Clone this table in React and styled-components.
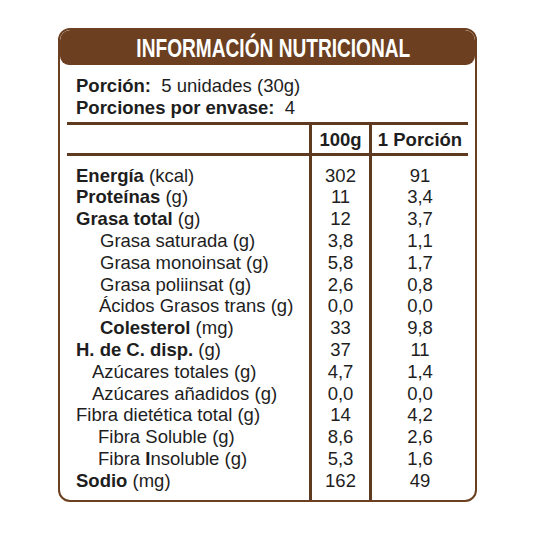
import React from "react";
import styled, { createGlobalStyle } from "styled-components";

const GlobalStyle = createGlobalStyle`
  html, body {
    margin: 0;
    padding: 0;
    background: #ffffff;
  }
  body {
    font-family: "Liberation Sans", Arial, sans-serif;
    color: #1e1e1e;
  }
`;

const BROWN = "#6b3f1f";
const LINE = "#5e3a20";

const Page = styled.div`
  width: 533px;
  height: 533px;
  box-sizing: border-box;
  padding: 28px 0 0 58px;
`;

const Card = styled.div`
  width: 419px;
  box-sizing: border-box;
  border: 2px solid ${BROWN};
  border-radius: 12px;
  overflow: hidden;
  background: #ffffff;
`;

// brown band: its lower corners curve away from the side borders
const Header = styled.div`
  height: 35px;
  background: ${BROWN};
  border-radius: 10px 10px 9px 9px;
  display: flex;
  align-items: center;
  justify-content: center;
  padding-left: 11px;
`;

const Title = styled.span`
  display: inline-block;
  color: #ffffff;
  font-weight: 700;
  font-size: 26px;
  line-height: 26px;
  white-space: nowrap;
  transform: scaleX(0.735);
`;

const Body = styled.div`
  padding: 0 7px;
`;

const Serving = styled.div`
  padding: 10px 9px 3px;
  font-size: 18.5px;
  line-height: 21.8px;
`;

const Line = styled.div`
  white-space: nowrap;
`;

const Table = styled.div`
  border-top: 3px solid ${LINE};
`;

const Row = styled.div`
  display: grid;
  grid-template-columns: 242px 60px 1fr;
  font-size: 18.5px;
  line-height: 21.8px;
`;

const HeadCell = styled.div`
  height: 28px;
  line-height: 29px;
  font-weight: 700;
  text-align: center;
  white-space: nowrap;
  border-bottom: 3px solid ${LINE};
  border-left: ${(p) => (p.$line ? `3px solid ${LINE}` : "none")};
`;

const Label = styled.div`
  padding-left: ${(p) => p.$indent}px;
  padding-top: ${(p) => (p.$first ? 9 : 0)}px;
  padding-bottom: ${(p) => (p.$last ? 8 : 0)}px;
  white-space: nowrap;
`;

const Value = styled.div`
  text-align: center;
  border-left: 3px solid ${LINE};
  padding-top: ${(p) => (p.$first ? 9 : 0)}px;
  padding-bottom: ${(p) => (p.$last ? 8 : 0)}px;
`;

const rows = [
  { b: "Energía", r: " (kcal)", v: "302", p: "91", i: 9 },
  { b: "Proteínas", r: " (g)", v: "11", p: "3,4", i: 9 },
  { b: "Grasa total", r: " (g)", v: "12", p: "3,7", i: 9 },
  { r: "Grasa saturada (g)", v: "3,8", p: "1,1", i: 33 },
  { r: "Grasa monoinsat (g)", v: "5,8", p: "1,7", i: 33 },
  { r: "Grasa poliinsat (g)", v: "2,6", p: "0,8", i: 33 },
  { r: "Ácidos Grasos trans (g)", v: "0,0", p: "0,0", i: 32 },
  { b: "Colesterol", r: " (mg)", v: "33", p: "9,8", i: 33 },
  { b: "H. de C. disp.", r: " (g)", v: "37", p: "11", i: 9 },
  { r: "Azúcares totales (g)", v: "4,7", p: "1,4", i: 25 },
  { r: "Azúcares añadidos (g)", v: "0,0", p: "0,0", i: 25 },
  { r: "Fibra dietética total (g)", v: "14", p: "4,2", i: 9 },
  { r: "Fibra Soluble (g)", v: "8,6", p: "2,6", i: 31 },
  { pre: "Fibra ", b: "I", r: "nsoluble (g)", v: "5,3", p: "1,6", i: 31 },
  { b: "Sodio", r: " (mg)", v: "162", p: "49", i: 9 },
];

export default function App() {
  return (
    <Page>
      <GlobalStyle />
      <Card>
        <Header>
          <Title>INFORMACIÓN NUTRICIONAL</Title>
        </Header>
        <Body>
          <Serving>
            <Line>
              <b>Porción:</b>&nbsp; 5 unidades (30g)
            </Line>
            <Line>
              <b>Porciones por envase:</b>&nbsp; 4
            </Line>
          </Serving>
          <Table>
            <Row>
              <HeadCell />
              <HeadCell $line>100g</HeadCell>
              <HeadCell $line>1 Porción</HeadCell>
            </Row>
            {rows.map((row, idx) => {
              const first = idx === 0;
              const last = idx === rows.length - 1;
              return (
                <Row key={idx}>
                  <Label $indent={row.i} $first={first} $last={last}>
                    {row.pre}
                    {row.b && <b>{row.b}</b>}
                    {row.r}
                  </Label>
                  <Value $first={first} $last={last}>
                    {row.v}
                  </Value>
                  <Value $first={first} $last={last}>
                    {row.p}
                  </Value>
                </Row>
              );
            })}
          </Table>
        </Body>
      </Card>
    </Page>
  );
}
